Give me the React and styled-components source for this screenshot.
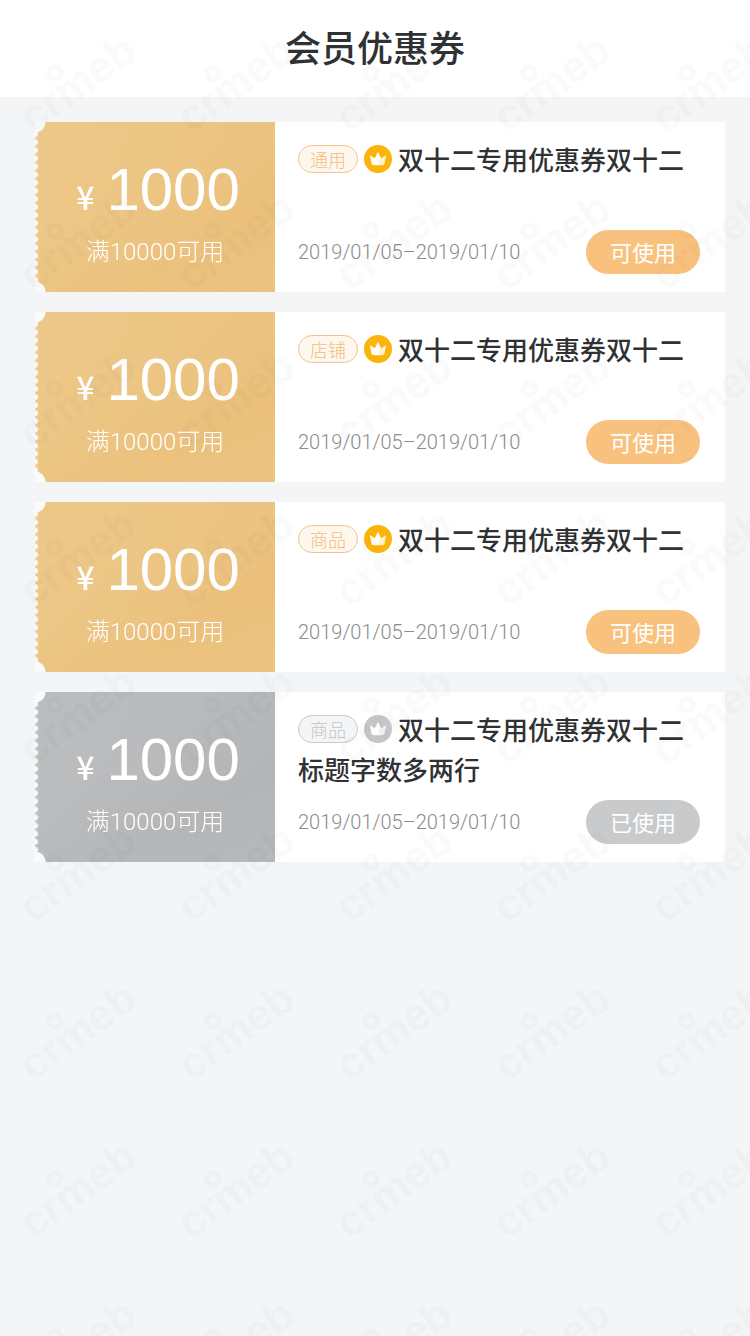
import styled, { createGlobalStyle } from 'styled-components'

const coupons = [
    { id: 1, tag: '通用', title: '双十二专用优惠券双十二', price: 1000, min: 10000, date: '2019/01/05–2019/01/10', used: false },
    { id: 2, tag: '店铺', title: '双十二专用优惠券双十二', price: 1000, min: 10000, date: '2019/01/05–2019/01/10', used: false },
    { id: 3, tag: '商品', title: '双十二专用优惠券双十二', price: 1000, min: 10000, date: '2019/01/05–2019/01/10', used: false },
    { id: 4, tag: '商品', title: '双十二专用优惠券双十二标题字数多两行', price: 1000, min: 10000, date: '2019/01/05–2019/01/10', used: true },
]

function Crown() {
    return (
        <svg width="16" height="14" viewBox="0 0 16 14" aria-hidden="true">
            <path fill="#fff" d="M.6 3.6 4.3 6Q4.8 6.2 5.1 5.7L7.4.7Q8 0 8.6.7l2.3 5q.3.5.8.3l3.7-2.4q.7-.2.6.5l-1.7 8.1q-.1.4-.6.5-5.7 1.2-11.4 0-.5-.1-.6-.5L0 4.1q0-.7.6-.5z" />
            <path fill="currentColor" fillOpacity=".18" d="M8.6.7l2.3 5q.3.5.8.3l3.7-2.4q.7-.2.6.5l-1.7 8.1q-.1.4-.6.5-2.8.6-5.7.6 3-5 .6-12.6z" />
        </svg>
    )
}

function Watermark() {
    return (
        <StyledWatermark aria-hidden="true">
            <defs>
                <pattern id="mark" width="158" height="158" patternUnits="userSpaceOnUse">
                    <g opacity=".018">
                        <text transform="translate(33 134) rotate(-36)">crmeb</text>
                        <circle cx="55" cy="73" r="6" fill="none" stroke="#000" strokeWidth="5" />
                    </g>
                </pattern>
            </defs>
            <rect width="100%" height="100%" fill="url(#mark)" />
        </StyledWatermark>
    )
}

function Coupon({ tag, title, price, min, date, used }) {
    return (
        <StyledCoupon>
            <StyledTicket $used={used}>
                <StyledPrice><small>¥</small>{price}</StyledPrice>
                <StyledLimit>满{min}可用</StyledLimit>
            </StyledTicket>
            <StyledInfo>
                <StyledTitle>
                    <StyledTag $used={used}>{tag}</StyledTag>
                    <StyledBadge $used={used}><Crown /></StyledBadge>
                    {title}
                </StyledTitle>
                <StyledFooter>
                    <StyledDate>{date}</StyledDate>
                    <StyledButton type="button" $used={used} disabled={used}>
                        {used ? '已使用' : '可使用'}
                    </StyledButton>
                </StyledFooter>
            </StyledInfo>
        </StyledCoupon>
    )
}

export default function App() {
    return (
        <>
            <GlobalStyle />
            <StyledHeader>
                <h1>会员优惠券</h1>
            </StyledHeader>
            <StyledList>
                {coupons.map(coupon => <Coupon key={coupon.id} {...coupon} />)}
            </StyledList>
            <Watermark />
        </>
    )
}

const GlobalStyle = createGlobalStyle`
    * {
        box-sizing: border-box;
    }
    body {
        margin: 0;
        min-height: 100vh;
        background: #f3f5f7;
        color: #303133;
        font-family: "Noto Sans CJK SC", sans-serif;
    }
`;

const StyledHeader = styled.header`
    padding: 20px 0 25px;
    background: #fff;
    text-align: center;

    h1 {
        margin: 0;
        font-size: 36px;
        line-height: 52px;
        font-weight: 500;
    }
`;

const StyledList = styled.ul`
    display: flex;
    flex-direction: column;
    gap: 20px;
    margin: 0;
    padding: 25px 25px 25px 35px;
    list-style: none;
`;

const StyledCoupon = styled.li`
    display: flex;
    min-height: 170px;
    background: #fafbfc;
`;

/* left edge: two cut corners with a row of small notches between them */
const StyledTicket = styled.div`
    display: flex;
    flex-direction: column;
    align-items: center;
    flex: none;
    width: 240px;
    padding-top: 36px;
    color: #fff;
    background-image:
        linear-gradient(150deg, transparent 40%, ${({ $used }) => $used ? 'rgba(160,162,164,.14)' : 'rgba(232,176,96,.16)'} 70%, transparent 92%),
        linear-gradient(110deg, ${({ $used }) => $used ? '#bbbdbe, #b5b7b8' : '#edc888, #ebc27f'});
    mask-image:
        radial-gradient(circle at 0 0, transparent 10px, #000 11px),
        radial-gradient(circle at 0 100%, transparent 10px, #000 11px),
        radial-gradient(circle at 0 50%, transparent 2px, #000 4px);
    mask-size: 100% 100%, 100% 100%, 100% 8px;
    mask-repeat: no-repeat, no-repeat, round;
    mask-composite: intersect;
`;

const StyledPrice = styled.div`
    padding-left: 6px;
    font-family: "Liberation Sans", sans-serif;
    font-size: 60px;
    line-height: 64px;

    small {
        margin-right: 12px;
        font-family: "Noto Sans CJK SC", sans-serif;
        font-size: 32px;
        line-height: 32px;
        font-weight: 500;
    }
`;

const StyledLimit = styled.div`
    margin-top: 12px;
    font-family: Roboto, "Noto Sans CJK SC", sans-serif;
    font-size: 24px;
    line-height: 36px;
    font-weight: 300;
`;

const StyledInfo = styled.div`
    display: flex;
    flex: 1;
    flex-direction: column;
    justify-content: space-between;
    padding: 17px 25px 18px 23px;
    background: #fff;
`;

const StyledTitle = styled.h2`
    margin: 0;
    font-size: 26px;
    line-height: 40px;
    font-weight: 500;
`;

const StyledTag = styled.span`
    display: inline-block;
    width: 60px;
    height: 28px;
    margin: 6px 6px 0 0;
    border: 1px solid ${({ $used }) => $used ? '#c8cacc' : '#f2c590'};
    border-radius: 14px;
    background: ${({ $used }) => $used ? '#f4f5f6' : '#fef7ee'};
    color: ${({ $used }) => $used ? '#c4c6c8' : '#f2bd7d'};
    font-size: 18px;
    line-height: 26px;
    font-weight: 300;
    text-align: center;
    vertical-align: top;
`;

const StyledBadge = styled.span`
    display: inline-flex;
    align-items: center;
    justify-content: center;
    width: 28px;
    height: 28px;
    margin: 6px 6px 0 0;
    border-radius: 50%;
    background: ${({ $used }) => $used ? '#c4c6c8' : '#fbb40a'};
    color: ${({ $used }) => $used ? '#c4c6c8' : '#fbb40a'};
    vertical-align: top;
`;

const StyledFooter = styled.div`
    display: flex;
    align-items: center;
    justify-content: space-between;
`;

const StyledDate = styled.span`
    color: #8c8c8c;
    font-family: Roboto, sans-serif;
    font-size: 20px;
    line-height: 28px;
    font-weight: 300;
`;

const StyledButton = styled.button`
    width: 114px;
    height: 44px;
    padding: 0 0 3px;
    border: 0;
    border-radius: 22px;
    background: ${({ $used }) => $used ? '#c8cacc' : '#f9c17e'};
    color: #fff;
    font-family: inherit;
    font-size: 22px;
`;

const StyledWatermark = styled.svg`
    position: fixed;
    inset: 0;
    width: 100%;
    height: 100%;
    pointer-events: none;

    text {
        font-family: "Liberation Sans", sans-serif;
        font-size: 44px;
        font-weight: 700;
    }
`;
